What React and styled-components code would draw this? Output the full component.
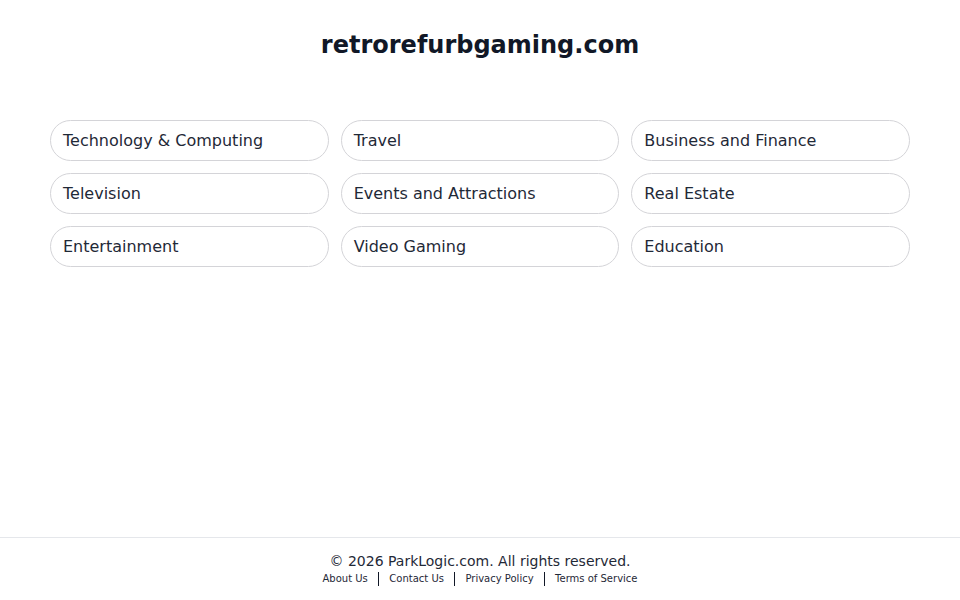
import React from "react";
import styled, { createGlobalStyle } from "styled-components";

const Global = createGlobalStyle`
  html, body { margin: 0; padding: 0; background: #fff; }
  body { font-family: "DejaVu Sans", sans-serif; color: #111827; }
  * { box-sizing: border-box; }
`;

const Page = styled.div`
  min-height: 100vh;
  display: flex;
  flex-direction: column;
`;

const Main = styled.main`
  flex: 1;
  width: 860px;
  margin: 0 auto;
`;

const Title = styled.h1`
  margin: 31px 0 60px;
  font-size: 24px;
  line-height: 29px;
  font-weight: bold;
  text-align: center;
  color: #111827;
`;

const Grid = styled.div`
  display: grid;
  grid-template-columns: repeat(3, 1fr);
  gap: 12px;
`;

const Pill = styled.a`
  display: flex;
  align-items: center;
  height: 41px;
  padding: 0 12px;
  border: 1px solid #d4d4d8;
  border-radius: 21px;
  font-size: 16px;
  color: #1f2937;
  text-decoration: none;
  background: #fff;
`;

const Footer = styled.footer`
  border-top: 1px solid #e5e7eb;
  padding: 15px 0 13px;
  text-align: center;
`;

const Copy = styled.div`
  font-size: 14px;
  line-height: 17px;
  color: #1f2937;
`;

const Links = styled.div`
  display: flex;
  justify-content: center;
  align-items: center;
  margin-top: 1px;
  font-size: 10px;
  line-height: 16px;
`;

const FootLink = styled.a`
  color: #1f2937;
  text-decoration: none;
`;

const Sep = styled.span`
  display: inline-block;
  width: 1.5px;
  height: 14px;
  background: #111827;
  margin: 0 10px;
`;

const topics = [
  "Technology & Computing",
  "Travel",
  "Business and Finance",
  "Television",
  "Events and Attractions",
  "Real Estate",
  "Entertainment",
  "Video Gaming",
  "Education",
];

const footLinks = ["About Us", "Contact Us", "Privacy Policy", "Terms of Service"];

export default function App() {
  return (
    <Page>
      <Global />
      <Main>
        <Title>retrorefurbgaming.com</Title>
        <Grid>
          {topics.map((t) => (
            <Pill key={t} href="#">{t}</Pill>
          ))}
        </Grid>
      </Main>
      <Footer>
        <Copy>© 2026 ParkLogic.com. All rights reserved.</Copy>
        <Links>
          {footLinks.map((l, i) => (
            <React.Fragment key={l}>
              {i > 0 && <Sep />}
              <FootLink href="#">{l}</FootLink>
            </React.Fragment>
          ))}
        </Links>
      </Footer>
    </Page>
  );
}
